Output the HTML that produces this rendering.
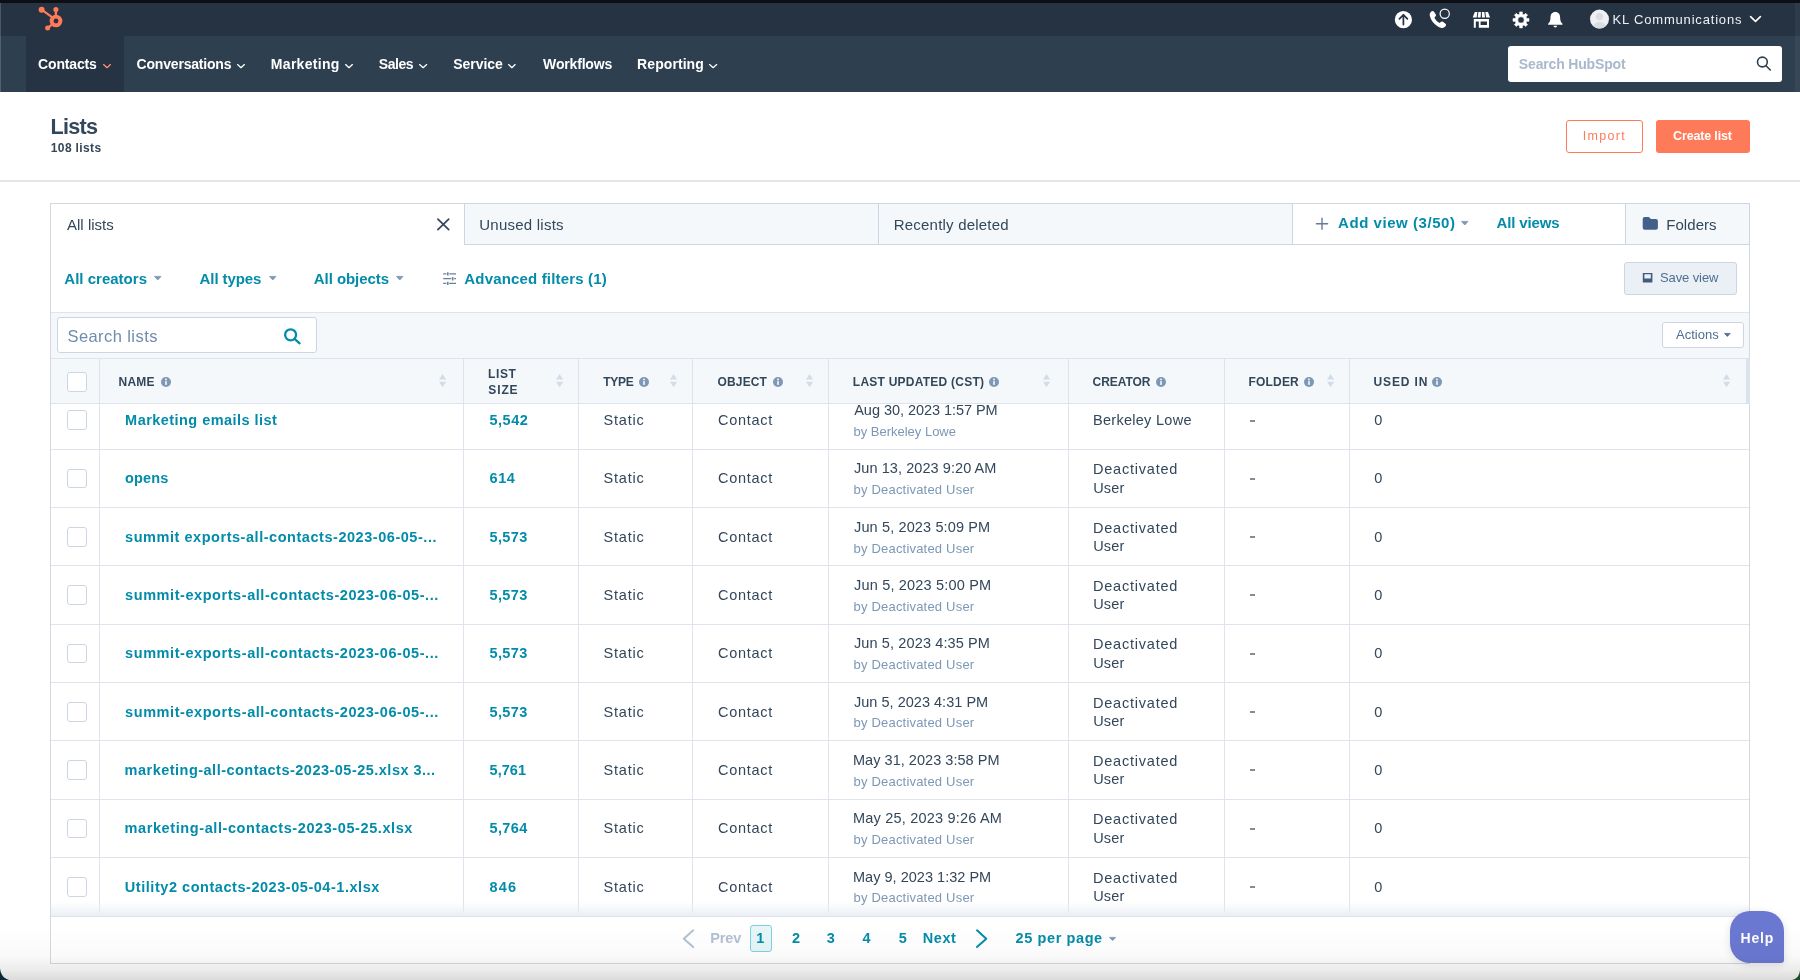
<!DOCTYPE html>
<html lang="en"><head><meta charset="utf-8"><title>Lists</title>
<style>
html,body{margin:0;padding:0}
body{width:1800px;height:980px;position:relative;overflow:hidden;background:#fff;font-family:'Liberation Sans', sans-serif;}
.t{position:absolute;white-space:pre;line-height:1;font-family:'Liberation Sans', sans-serif;}
#L{position:absolute;left:0;top:0;width:1800px;height:980px;will-change:transform;}
.a{position:absolute;box-sizing:border-box;}
svg{position:absolute;overflow:visible}
</style></head>
<body>
<div id="L">
<div class="a" style="left:0px;top:0px;width:1800px;height:2.8px;background:#0d0f14"></div>
<div class="a" style="left:0px;top:3px;width:1800px;height:33px;background:#253342"></div>
<div class="a" style="left:0px;top:35.5px;width:1800px;height:56px;background:#2e3f50"></div>
<div class="a" style="left:26px;top:35.5px;width:97.5px;height:56px;background:#253342"></div>
<div class="a" style="left:0px;top:0px;width:1800px;height:2.8px;background:#0d0f14"></div>
<div class="a" style="left:1794.5px;top:3px;width:5.5px;height:88.5px;background:rgba(255,255,255,0.045)"></div>
<div class="a" style="left:0px;top:3px;width:1px;height:88.5px;background:rgba(255,255,255,0.18)"></div>
<div class="a" style="left:1507.5px;top:45.75px;width:274.25px;height:35.75px;background:#fff;border-radius:3px"></div>
<div class="a" style="left:0px;top:180px;width:1800px;height:2px;background:#e3e6eb"></div>
<div class="a" style="left:1566px;top:119.5px;width:77px;height:33.25px;border:1px solid #ff7a59;border-radius:3px;background:#fff"></div>
<div class="a" style="left:1656px;top:119.5px;width:94px;height:33.25px;background:#ff7a59;border-radius:3px"></div>
<div class="a" style="left:50px;top:203px;width:1700px;height:761px;border:1px solid #d5d9df;background:#fff"></div>
<div class="a" style="left:464.25px;top:203px;width:828.75px;height:42px;background:#f5f8fa;border:1px solid #cbd6e2"></div>
<div class="a" style="left:878px;top:204px;width:1px;height:40.5px;background:#cbd6e2"></div>
<div class="a" style="left:1292px;top:244px;width:334px;height:1px;background:#cbd6e2"></div>
<div class="a" style="left:1625.25px;top:203px;width:124.5px;height:42px;background:#f5f8fa;border:1px solid #cbd6e2"></div>
<div class="a" style="left:1624px;top:262.25px;width:112.75px;height:32.25px;background:#eaf0f6;border:1px solid #cbd6e2;border-radius:3px"></div>
<div class="a" style="left:51px;top:312px;width:1698px;height:46px;background:#f5f8fa;border-top:1px solid #dfe3eb"></div>
<div class="a" style="left:57px;top:317px;width:259.75px;height:36px;background:#fff;border:1px solid #cbd6e2;border-radius:3px"></div>
<div class="a" style="left:1662px;top:321.75px;width:82px;height:26px;background:#fff;border:1px solid #cbd6e2;border-radius:3px"></div>
<div class="a" style="left:51px;top:358px;width:1698px;height:46px;background:#f5f8fa;border-top:1px solid #dfe3eb;border-bottom:1px solid #dfe3eb"></div>
<div class="a" style="left:1746px;top:358px;width:3.5px;height:46px;background:#dbe3ee"></div>
<div class="a" style="left:99.0px;top:358px;width:1px;height:554.5px;background:#dfe3eb"></div>
<div class="a" style="left:463.0px;top:358px;width:1px;height:554.5px;background:#dfe3eb"></div>
<div class="a" style="left:578.0px;top:358px;width:1px;height:554.5px;background:#dfe3eb"></div>
<div class="a" style="left:692.0px;top:358px;width:1px;height:554.5px;background:#dfe3eb"></div>
<div class="a" style="left:828.0px;top:358px;width:1px;height:554.5px;background:#dfe3eb"></div>
<div class="a" style="left:1067.5px;top:358px;width:1px;height:554.5px;background:#dfe3eb"></div>
<div class="a" style="left:1224.0px;top:358px;width:1px;height:554.5px;background:#dfe3eb"></div>
<div class="a" style="left:1349.0px;top:358px;width:1px;height:554.5px;background:#dfe3eb"></div>
<div class="a" style="left:51px;top:448.75px;width:1698px;height:1px;background:#dfe3eb"></div>
<div class="a" style="left:51px;top:507.08px;width:1698px;height:1px;background:#dfe3eb"></div>
<div class="a" style="left:51px;top:565.41px;width:1698px;height:1px;background:#dfe3eb"></div>
<div class="a" style="left:51px;top:623.74px;width:1698px;height:1px;background:#dfe3eb"></div>
<div class="a" style="left:51px;top:682.0699999999999px;width:1698px;height:1px;background:#dfe3eb"></div>
<div class="a" style="left:51px;top:740.4px;width:1698px;height:1px;background:#dfe3eb"></div>
<div class="a" style="left:51px;top:798.73px;width:1698px;height:1px;background:#dfe3eb"></div>
<div class="a" style="left:51px;top:857.06px;width:1698px;height:1px;background:#dfe3eb"></div>
<div class="a" style="left:51px;top:902px;width:1698px;height:15px;background:linear-gradient(to bottom, rgba(235,240,246,0) 0%, rgba(232,237,244,0.95) 100%)"></div>
<div class="a" style="left:51px;top:916px;width:1698px;height:47px;background:#fff;border-top:1.5px solid #dde3ec"></div>
<div class="a" style="left:750px;top:925.25px;width:22px;height:26.25px;background:#e5f5f8;border:1px solid #7fd1de;border-radius:3px"></div>
<div class="a" style="left:67px;top:371.5px;width:20px;height:20px;background:#fff;border:1.5px solid #cbd6e2;border-radius:3px"></div>
<div class="a" style="left:67px;top:410.20000000000005px;width:20px;height:19.8px;background:#fff;border:1.5px solid #cbd6e2;border-radius:3px"></div>
<div class="a" style="left:67px;top:468.53000000000003px;width:20px;height:19.8px;background:#fff;border:1.5px solid #cbd6e2;border-radius:3px"></div>
<div class="a" style="left:67px;top:526.86px;width:20px;height:19.8px;background:#fff;border:1.5px solid #cbd6e2;border-radius:3px"></div>
<div class="a" style="left:67px;top:585.19px;width:20px;height:19.8px;background:#fff;border:1.5px solid #cbd6e2;border-radius:3px"></div>
<div class="a" style="left:67px;top:643.5200000000001px;width:20px;height:19.8px;background:#fff;border:1.5px solid #cbd6e2;border-radius:3px"></div>
<div class="a" style="left:67px;top:701.85px;width:20px;height:19.8px;background:#fff;border:1.5px solid #cbd6e2;border-radius:3px"></div>
<div class="a" style="left:67px;top:760.1800000000001px;width:20px;height:19.8px;background:#fff;border:1.5px solid #cbd6e2;border-radius:3px"></div>
<div class="a" style="left:67px;top:818.5100000000001px;width:20px;height:19.8px;background:#fff;border:1.5px solid #cbd6e2;border-radius:3px"></div>
<div class="a" style="left:67px;top:876.84px;width:20px;height:19.8px;background:#fff;border:1.5px solid #cbd6e2;border-radius:3px"></div>
<div class="a" style="left:1730px;top:910.75px;width:53.6px;height:52.3px;background:#6a78d1;border-radius:20px 20px 3px 20px;box-shadow:0 2px 8px rgba(0,0,0,0.12)"></div>
<div class="a" style="left:1250.25px;top:420px;width:4.75px;height:2px;background:#33475b;opacity:0.62"></div>
<div class="a" style="left:1250.25px;top:478px;width:4.75px;height:2px;background:#33475b;opacity:0.62"></div>
<div class="a" style="left:1250.25px;top:536px;width:4.75px;height:2px;background:#33475b;opacity:0.62"></div>
<div class="a" style="left:1250.25px;top:594px;width:4.75px;height:2px;background:#33475b;opacity:0.62"></div>
<div class="a" style="left:1250.25px;top:653px;width:4.75px;height:2px;background:#33475b;opacity:0.62"></div>
<div class="a" style="left:1250.25px;top:711px;width:4.75px;height:2px;background:#33475b;opacity:0.62"></div>
<div class="a" style="left:1250.25px;top:769px;width:4.75px;height:2px;background:#33475b;opacity:0.62"></div>
<div class="a" style="left:1250.25px;top:828px;width:4.75px;height:2px;background:#33475b;opacity:0.62"></div>
<div class="a" style="left:1250.25px;top:886px;width:4.75px;height:2px;background:#33475b;opacity:0.62"></div>
<svg style="left:36px;top:4px" width="30" height="30" viewBox="36 4 30 30"><g fill="none" stroke="#ff7a59" stroke-width="2.3" stroke-linecap="round"><circle cx="56" cy="21" r="4.4" stroke-width="3.9"/><line x1="55.9" y1="10.5" x2="55.9" y2="15.5"/><line x1="42.6" y1="10.4" x2="51.6" y2="16.9"/><line x1="48.2" y1="27.5" x2="52" y2="24.6"/></g><g fill="#ff7a59"><circle cx="41.6" cy="9.7" r="3"/><circle cx="55.9" cy="9.5" r="2.55"/><circle cx="47.6" cy="28.1" r="2.5"/></g></svg>
<svg style="left:100.5px;top:61.75px" width="12.0" height="8.25" viewBox="100.5 61.75 12.0 8.25"><polyline points="103.1,64.35 106.5,67.4 109.9,64.35" fill="none" stroke="#ff8f73" stroke-width="1.35" stroke-linecap="round" stroke-linejoin="round"/></svg>
<svg style="left:235px;top:61.75px" width="12" height="8.25" viewBox="235 61.75 12 8.25"><polyline points="237.6,64.35 241.0,67.4 244.4,64.35" fill="none" stroke="#ffffff" stroke-width="1.35" stroke-linecap="round" stroke-linejoin="round"/></svg>
<svg style="left:342.5px;top:61.75px" width="12.0" height="8.25" viewBox="342.5 61.75 12.0 8.25"><polyline points="345.1,64.35 348.5,67.4 351.9,64.35" fill="none" stroke="#ffffff" stroke-width="1.35" stroke-linecap="round" stroke-linejoin="round"/></svg>
<svg style="left:417.25px;top:61.75px" width="12.25" height="8.25" viewBox="417.25 61.75 12.25 8.25"><polyline points="419.85,64.35 423.375,67.4 426.9,64.35" fill="none" stroke="#ffffff" stroke-width="1.35" stroke-linecap="round" stroke-linejoin="round"/></svg>
<svg style="left:506px;top:61.75px" width="11.75" height="8.25" viewBox="506 61.75 11.75 8.25"><polyline points="508.6,64.35 511.875,67.4 515.15,64.35" fill="none" stroke="#ffffff" stroke-width="1.35" stroke-linecap="round" stroke-linejoin="round"/></svg>
<svg style="left:706.75px;top:61.75px" width="12.25" height="8.25" viewBox="706.75 61.75 12.25 8.25"><polyline points="709.35,64.35 712.875,67.4 716.4,64.35" fill="none" stroke="#ffffff" stroke-width="1.35" stroke-linecap="round" stroke-linejoin="round"/></svg>
<svg style="left:1748px;top:14.25px" width="15" height="10.0" viewBox="1748 14.25 15 10.0"><polyline points="1750.6,16.85 1755.5,21.65 1760.4,16.85" fill="none" stroke="#ffffff" stroke-width="1.6" stroke-linecap="round" stroke-linejoin="round"/></svg>
<svg style="left:1393px;top:9px" width="22" height="22" viewBox="1393 9 22 22"><circle cx="1403.4" cy="19.7" r="8.6" fill="#fff"/><g fill="none" stroke="#253342" stroke-width="1.7" stroke-linecap="round" stroke-linejoin="round"><line x1="1403.4" y1="15" x2="1403.4" y2="24.6"/><polyline points="1399.4,18.8 1403.4,14.8 1407.4,18.8"/></g></svg>
<svg style="left:1428px;top:9px" width="24" height="22" viewBox="1428 9 24 22"><path d="M1431.2 11.6 c0.9 -0.9 2 -0.8 2.6 0 l1.9 2.7 c0.5 0.8 0.4 1.6 -0.3 2.2 l-1 0.9 c1 2.3 2.9 4.4 5.3 5.6 l1 -1 c0.6 -0.6 1.5 -0.7 2.2 -0.2 l2.6 1.9 c0.8 0.6 0.8 1.7 0 2.5 l-1.2 1.1 c-1 0.9 -2.4 1 -3.7 0.5 c-5.2 -2 -9.500 -6.7 -10.8 -12.1 c-0.300 -1.300 0 -2.600 0.900 -3.400 z" fill="#fff"/><circle cx="1444.7" cy="13.8" r="4.6" fill="#253342" stroke="#fff" stroke-width="1.2"/></svg>
<svg style="left:1471px;top:10px" width="22" height="20" viewBox="1471 10 22 20"><g fill="#fff"><path d="M1474.8 12 h2.6 l-0.7 5.6 h-4 z"/><path d="M1478.4 12 h2.500 l-0.2 5.6 h-3 z"/><path d="M1481.900 12 h2.500 l0.600 5.600 h-3 z"/><path d="M1485.400 12 h2.600 l2.100 5.600 h-4 z"/><path d="M1473.8 19 h15.2 v8.8 h-15.2 z M1475.800 21.400 v6.400 h3 v-6.400 z M1480.600 21.400 v3.600 h6.400 v-3.600 z" fill-rule="evenodd"/></g></svg>
<svg style="left:1511px;top:10px" width="20" height="20" viewBox="1511 10 20 20"><path d="M1528.98 18.51 L1528.98 21.29 L1526.74 21.28 L1526.03 22.98 L1527.63 24.56 L1525.66 26.53 L1524.08 24.93 L1522.38 25.64 L1522.39 27.88 L1519.61 27.88 L1519.62 25.64 L1517.92 24.93 L1516.34 26.53 L1514.37 24.56 L1515.97 22.98 L1515.26 21.28 L1513.02 21.29 L1513.02 18.51 L1515.26 18.52 L1515.97 16.82 L1514.37 15.24 L1516.34 13.27 L1517.92 14.87 L1519.62 14.16 L1519.61 11.92 L1522.39 11.92 L1522.38 14.16 L1524.08 14.87 L1525.66 13.27 L1527.63 15.24 L1526.03 16.82 L1526.74 18.52 Z M1524.20 19.90 A3.2 3.2 0 1 0 1517.80 19.90 A3.2 3.2 0 1 0 1524.20 19.90 Z" fill="#fff" fill-rule="evenodd" stroke="#fff" stroke-width="0.6" stroke-linejoin="round"/></svg>
<svg style="left:1546px;top:10px" width="20" height="20" viewBox="1546 10 20 20"><path d="M1555.300 12 c-3.200 0 -4.800 2.400 -4.800 5.400 c0 3.600 -1 5 -2.400 6.400 v0.900 h14.400 v-0.900 c-1.400 -1.400 -2.400 -2.800 -2.400 -6.400 c0 -3 -1.600 -5.400 -4.800 -5.400 z" fill="#fff"/><path d="M1553.500 25.700 h3.600 c0 1 -0.800 1.700 -1.800 1.700 s-1.800 -0.700 -1.800 -1.700 z" fill="#fff"/></svg>
<svg style="left:1589px;top:9px" width="22" height="22" viewBox="1589 9 22 22"><defs><clipPath id="avc"><circle cx="1599.5" cy="19.1" r="9.5"/></clipPath></defs><circle cx="1599.5" cy="19.1" r="9.5" fill="#eef0f3"/><g clip-path="url(#avc)" fill="#d9dde3"><circle cx="1599.5" cy="16.6" r="3.6"/><ellipse cx="1599.5" cy="27.5" rx="6.8" ry="5.4"/></g></svg>
<svg style="left:1754px;top:55px" width="20" height="20" viewBox="1754 55 20 20"><g fill="none" stroke="#2d3e50" stroke-width="1.600" stroke-linecap="round"><circle cx="1762.400" cy="62" r="4.900"/><line x1="1766" y1="65.700" x2="1770.300" y2="70"/></g></svg>
<svg style="left:435px;top:216px" width="17" height="17" viewBox="435 216 17 17"><g stroke="#33475b" stroke-width="1.7" stroke-linecap="round"><line x1="437.900" y1="219.100" x2="448.700" y2="229.700"/><line x1="448.700" y1="219.100" x2="437.900" y2="229.700"/></g></svg>
<svg style="left:152.75px;top:274.6px" width="9.5" height="6.4" viewBox="152.75 274.6 9.5 6.4"><path d="M154.25 276.0 h6.5 l-3.25 3.6000000000000005 z" fill="#7c98b6" stroke="#7c98b6" stroke-width="0.8" stroke-linejoin="round"/></svg>
<svg style="left:267.5px;top:274.6px" width="9.5" height="6.4" viewBox="267.5 274.6 9.5 6.4"><path d="M269.0 276.0 h6.5 l-3.25 3.6000000000000005 z" fill="#7c98b6" stroke="#7c98b6" stroke-width="0.8" stroke-linejoin="round"/></svg>
<svg style="left:394.5px;top:274.6px" width="9.5" height="6.4" viewBox="394.5 274.6 9.5 6.4"><path d="M396.0 276.0 h6.5 l-3.25 3.6000000000000005 z" fill="#7c98b6" stroke="#7c98b6" stroke-width="0.8" stroke-linejoin="round"/></svg>
<svg style="left:1460.3px;top:219.8px" width="9.5" height="6.4" viewBox="1460.3 219.8 9.5 6.4"><path d="M1461.8 221.20000000000002 h6.5 l-3.25 3.6000000000000005 z" fill="#7c98b6" stroke="#7c98b6" stroke-width="0.8" stroke-linejoin="round"/></svg>
<svg style="left:1723px;top:331.8px" width="8.7" height="5.8" viewBox="1723 331.8 8.7 5.8"><path d="M1724.5 333.2 h5.7 l-2.85 3.0 z" fill="#506e91" stroke="#506e91" stroke-width="0.8" stroke-linejoin="round"/></svg>
<svg style="left:1108.3px;top:935.8px" width="9.2" height="6" viewBox="1108.3 935.8 9.2 6"><path d="M1109.8 937.1999999999999 h6.2 l-3.1 3.2 z" fill="#7c98b6" stroke="#7c98b6" stroke-width="0.8" stroke-linejoin="round"/></svg>
<svg style="left:441px;top:271px" width="17" height="16" viewBox="441 271 17 16"><g stroke="#6b7f9a" stroke-width="1.300" fill="none"><path d="M443.200 273.900 H446.400 M449.300 273.900 H456 M443.200 278.700 H451.300 M454.200 278.700 H456 M443.200 283.400 H446.400 M449.300 283.400 H456"/><path d="M447.800 272.200 V275.600 M452.700 277 V280.400 M447.800 281.700 V285.100" stroke-width="1.500"/></g></svg>
<svg style="left:1314px;top:216px" width="16" height="16" viewBox="1314 216 16 16"><g stroke="#657b98" stroke-width="1.400" stroke-linecap="round"><line x1="1316.400" y1="223.700" x2="1327.600" y2="223.700"/><line x1="1322" y1="218.100" x2="1322" y2="229.300"/></g></svg>
<svg style="left:1641px;top:215px" width="19" height="17" viewBox="1641 215 19 17"><path d="M1642.700 218.900 q0 -2 2 -2 h3.500 q1.200 0 1.800 1 l0.700 1.200 h5.200 q2 0 2 2 v6.600 q0 2 -2 2 h-11.200 q-2 0 -2 -2 z" fill="#44608a"/></svg>
<svg style="left:1641px;top:272px" width="13" height="12" viewBox="1641 272 13 12"><path d="M1642.800 273.100 h9.600 v9.500 h-9.600 z M1644.400 274.300 v4.200 h6.400 v-4.200 z" fill="#425b7e" fill-rule="evenodd"/></svg>
<svg style="left:282px;top:326px" width="21" height="21" viewBox="282 326 21 21"><g fill="none" stroke="#038ca9" stroke-width="2.300" stroke-linecap="round"><circle cx="290.600" cy="334.800" r="5.500"/><line x1="294.900" y1="339.100" x2="299.600" y2="343.300"/></g></svg>
<svg style="left:159.75px;top:376px" width="12" height="12" viewBox="159.75 376 12 12"><circle cx="165.75" cy="382" r="5" fill="#7c98b6"/><rect x="165.0" y="381.1" width="1.500" height="3.800" fill="#fff"/><circle cx="165.75" cy="379.4" r="0.900" fill="#fff"/></svg>
<svg style="left:638.25px;top:376px" width="12" height="12" viewBox="638.25 376 12 12"><circle cx="644.25" cy="382" r="5" fill="#7c98b6"/><rect x="643.5" y="381.1" width="1.500" height="3.800" fill="#fff"/><circle cx="644.25" cy="379.4" r="0.900" fill="#fff"/></svg>
<svg style="left:771.5px;top:376px" width="12" height="12" viewBox="771.5 376 12 12"><circle cx="777.5" cy="382" r="5" fill="#7c98b6"/><rect x="776.75" y="381.1" width="1.500" height="3.800" fill="#fff"/><circle cx="777.5" cy="379.4" r="0.900" fill="#fff"/></svg>
<svg style="left:988.25px;top:376px" width="12" height="12" viewBox="988.25 376 12 12"><circle cx="994.25" cy="382" r="5" fill="#7c98b6"/><rect x="993.5" y="381.1" width="1.500" height="3.800" fill="#fff"/><circle cx="994.25" cy="379.4" r="0.900" fill="#fff"/></svg>
<svg style="left:1154.75px;top:376px" width="12" height="12" viewBox="1154.75 376 12 12"><circle cx="1160.75" cy="382" r="5" fill="#7c98b6"/><rect x="1160.0" y="381.1" width="1.500" height="3.800" fill="#fff"/><circle cx="1160.75" cy="379.4" r="0.900" fill="#fff"/></svg>
<svg style="left:1303.3px;top:376px" width="12" height="12" viewBox="1303.3 376 12 12"><circle cx="1309.3" cy="382" r="5" fill="#7c98b6"/><rect x="1308.55" y="381.1" width="1.500" height="3.800" fill="#fff"/><circle cx="1309.3" cy="379.4" r="0.900" fill="#fff"/></svg>
<svg style="left:1431.3px;top:376px" width="12" height="12" viewBox="1431.3 376 12 12"><circle cx="1437.3" cy="382" r="5" fill="#7c98b6"/><rect x="1436.55" y="381.1" width="1.500" height="3.800" fill="#fff"/><circle cx="1437.3" cy="379.4" r="0.900" fill="#fff"/></svg>
<svg style="left:438.25px;top:372.75px" width="9.2" height="16" viewBox="438.25 372.75 9.2 16"><path d="M439.25 379.25 l3.6 -5.500 l3.6 5.500 z M439.25 381.55 h7.2 l-3.6 5.500 z" fill="#d3dce7"/></svg>
<svg style="left:554.5px;top:372.75px" width="9.2" height="16" viewBox="554.5 372.75 9.2 16"><path d="M555.5 379.25 l3.6 -5.500 l3.6 5.500 z M555.5 381.55 h7.2 l-3.6 5.500 z" fill="#d3dce7"/></svg>
<svg style="left:669px;top:372.75px" width="9.2" height="16" viewBox="669 372.75 9.2 16"><path d="M670 379.25 l3.6 -5.500 l3.6 5.500 z M670 381.55 h7.2 l-3.6 5.500 z" fill="#d3dce7"/></svg>
<svg style="left:804.5px;top:372.75px" width="9.2" height="16" viewBox="804.5 372.75 9.2 16"><path d="M805.5 379.25 l3.6 -5.500 l3.6 5.500 z M805.5 381.55 h7.2 l-3.6 5.500 z" fill="#d3dce7"/></svg>
<svg style="left:1042.25px;top:372.75px" width="9.2" height="16" viewBox="1042.25 372.75 9.2 16"><path d="M1043.25 379.25 l3.6 -5.500 l3.6 5.500 z M1043.25 381.55 h7.2 l-3.6 5.500 z" fill="#d3dce7"/></svg>
<svg style="left:1325.7px;top:372.75px" width="9.2" height="16" viewBox="1325.7 372.75 9.2 16"><path d="M1326.7 379.25 l3.6 -5.500 l3.6 5.500 z M1326.7 381.55 h7.2 l-3.6 5.500 z" fill="#d3dce7"/></svg>
<svg style="left:1722.3px;top:372.75px" width="9.2" height="16" viewBox="1722.3 372.75 9.2 16"><path d="M1723.3 379.25 l3.6 -5.500 l3.6 5.500 z M1723.3 381.55 h7.2 l-3.6 5.500 z" fill="#d3dce7"/></svg>
<svg style="left:680px;top:927px" width="17" height="23" viewBox="680 927 17 23"><polyline points="693.200,930.300 683.800,938.700 693.200,947" fill="none" stroke="#b0c1d4" stroke-width="2" stroke-linecap="round" stroke-linejoin="round"/></svg>
<svg style="left:974px;top:927px" width="17" height="23" viewBox="974 927 17 23"><polyline points="977,930.300 986.300,938.700 977,947" fill="none" stroke="#038ca9" stroke-width="2" stroke-linecap="round" stroke-linejoin="round"/></svg>
<span class="t" style="left:38.10px;top:57px;font-size:14px;color:#ffffff;font-weight:700;letter-spacing:-0.164px;">Contacts</span>
<span class="t" style="left:136.60px;top:57px;font-size:14px;color:#ffffff;font-weight:700;letter-spacing:-0.200px;">Conversations</span>
<span class="t" style="left:270.85px;top:57px;font-size:14px;color:#ffffff;font-weight:700;letter-spacing:0.294px;">Marketing</span>
<span class="t" style="left:378.85px;top:57px;font-size:14px;color:#ffffff;font-weight:700;letter-spacing:-0.475px;">Sales</span>
<span class="t" style="left:453.35px;top:57px;font-size:14px;color:#ffffff;font-weight:700;letter-spacing:-0.067px;">Service</span>
<span class="t" style="left:543.10px;top:57px;font-size:14px;color:#ffffff;font-weight:700;letter-spacing:-0.175px;">Workflows</span>
<span class="t" style="left:637.10px;top:57px;font-size:14px;color:#ffffff;font-weight:700;letter-spacing:0.075px;">Reporting</span>
<span class="t" style="left:1612.50px;top:13px;font-size:13px;color:#eef2f6;letter-spacing:0.819px;">KL Communications</span>
<span class="t" style="left:1518.85px;top:57px;font-size:14px;color:#a9b9cc;font-weight:700;letter-spacing:-0.165px;">Search HubSpot</span>
<span class="t" style="left:50.60px;top:116px;font-size:21.6px;color:#33475b;font-weight:700;letter-spacing:-0.725px;">Lists</span>
<span class="t" style="left:50.85px;top:142px;font-size:12px;color:#33475b;font-weight:700;letter-spacing:0.356px;">108 lists</span>
<span class="t" style="left:1582.75px;top:130px;font-size:12.5px;color:#ff7a59;letter-spacing:1.320px;">Import</span>
<span class="t" style="left:1673.10px;top:130px;font-size:12.5px;color:#ffffff;font-weight:700;letter-spacing:-0.165px;">Create list</span>
<span class="t" style="left:67.00px;top:217px;font-size:15px;color:#33475b;letter-spacing:0.013px;">All lists</span>
<span class="t" style="left:479.25px;top:217px;font-size:15px;color:#33475b;letter-spacing:0.236px;">Unused lists</span>
<span class="t" style="left:893.75px;top:217px;font-size:15px;color:#33475b;letter-spacing:0.207px;">Recently deleted</span>
<span class="t" style="left:1338.10px;top:215px;font-size:15px;color:#038ca9;font-weight:700;letter-spacing:0.543px;">Add view (3/50)</span>
<span class="t" style="left:1496.60px;top:215px;font-size:15px;color:#038ca9;font-weight:700;letter-spacing:-0.150px;">All views</span>
<span class="t" style="left:1666.25px;top:217px;font-size:15px;color:#33475b;letter-spacing:0.058px;">Folders</span>
<span class="t" style="left:64.35px;top:271px;font-size:15px;color:#038ca9;font-weight:700;letter-spacing:0.009px;">All creators</span>
<span class="t" style="left:199.60px;top:271px;font-size:15px;color:#038ca9;font-weight:700;letter-spacing:-0.081px;">All types</span>
<span class="t" style="left:313.85px;top:271px;font-size:15px;color:#038ca9;font-weight:700;letter-spacing:-0.065px;">All objects</span>
<span class="t" style="left:464.35px;top:271px;font-size:15px;color:#038ca9;font-weight:700;letter-spacing:0.163px;">Advanced filters (1)</span>
<span class="t" style="left:1660.05px;top:271px;font-size:13px;color:#506e91;letter-spacing:-0.112px;">Save view</span>
<span class="t" style="left:67.50px;top:328px;font-size:16.5px;color:#6f8cab;letter-spacing:0.418px;">Search lists</span>
<span class="t" style="left:1676.00px;top:328px;font-size:13px;color:#506e91;letter-spacing:0.008px;">Actions</span>
<span class="t" style="left:118.45px;top:376px;font-size:12px;color:#33475b;font-weight:700;letter-spacing:0.283px;">NAME</span>
<span class="t" style="left:488.10px;top:368px;font-size:12px;color:#33475b;font-weight:700;letter-spacing:0.617px;">LIST</span>
<span class="t" style="left:488.35px;top:384px;font-size:12px;color:#33475b;font-weight:700;letter-spacing:0.867px;">SIZE</span>
<span class="t" style="left:603.35px;top:376px;font-size:12px;color:#33475b;font-weight:700;letter-spacing:-0.300px;">TYPE</span>
<span class="t" style="left:717.60px;top:376px;font-size:12px;color:#33475b;font-weight:700;letter-spacing:0.120px;">OBJECT</span>
<span class="t" style="left:852.85px;top:376px;font-size:12px;color:#33475b;font-weight:700;letter-spacing:0.241px;">LAST UPDATED (CST)</span>
<span class="t" style="left:1092.60px;top:376px;font-size:12px;color:#33475b;font-weight:700;letter-spacing:-0.067px;">CREATOR</span>
<span class="t" style="left:1248.55px;top:376px;font-size:12px;color:#33475b;font-weight:700;letter-spacing:0.170px;">FOLDER</span>
<span class="t" style="left:1373.55px;top:376px;font-size:12px;color:#33475b;font-weight:700;letter-spacing:0.858px;">USED IN</span>
<span class="t" style="left:125.10px;top:413px;font-size:14.5px;color:#038ca9;font-weight:700;letter-spacing:0.455px;">Marketing emails list</span>
<span class="t" style="left:489.60px;top:413px;font-size:14.5px;color:#038ca9;font-weight:700;letter-spacing:0.463px;">5,542</span>
<span class="t" style="left:603.50px;top:413px;font-size:14.5px;color:#33475b;letter-spacing:0.820px;">Static</span>
<span class="t" style="left:718.00px;top:413px;font-size:14.5px;color:#33475b;letter-spacing:0.725px;">Contact</span>
<span class="t" style="left:854.25px;top:403px;font-size:14.5px;color:#33475b;letter-spacing:-0.047px;">Aug 30, 2023 1:57 PM</span>
<span class="t" style="left:853.50px;top:425px;font-size:13px;color:#7c98b6;letter-spacing:-0.010px;">by Berkeley Lowe</span>
<span class="t" style="left:1093.00px;top:413px;font-size:14.5px;color:#33475b;letter-spacing:0.279px;">Berkeley Lowe</span>
<span class="t" style="left:1374.20px;top:413px;font-size:14.5px;color:#33475b;">0</span>
<span class="t" style="left:125.10px;top:471px;font-size:14.5px;color:#038ca9;font-weight:700;letter-spacing:0.150px;">opens</span>
<span class="t" style="left:489.60px;top:471px;font-size:14.5px;color:#038ca9;font-weight:700;letter-spacing:0.550px;">614</span>
<span class="t" style="left:603.50px;top:471px;font-size:14.5px;color:#33475b;letter-spacing:0.820px;">Static</span>
<span class="t" style="left:718.00px;top:471px;font-size:14.5px;color:#33475b;letter-spacing:0.725px;">Contact</span>
<span class="t" style="left:854.00px;top:461px;font-size:14.5px;color:#33475b;letter-spacing:0.071px;">Jun 13, 2023 9:20 AM</span>
<span class="t" style="left:853.50px;top:483px;font-size:13px;color:#7c98b6;letter-spacing:0.200px;">by Deactivated User</span>
<span class="t" style="left:1093.00px;top:462px;font-size:14.5px;color:#33475b;letter-spacing:0.785px;">Deactivated</span>
<span class="t" style="left:1093.25px;top:481px;font-size:14.5px;color:#33475b;letter-spacing:0.117px;">User</span>
<span class="t" style="left:1374.20px;top:471px;font-size:14.5px;color:#33475b;">0</span>
<span class="t" style="left:125.10px;top:530px;font-size:14.5px;color:#038ca9;font-weight:700;letter-spacing:0.539px;">summit exports-all-contacts-2023-06-05-...</span>
<span class="t" style="left:489.60px;top:530px;font-size:14.5px;color:#038ca9;font-weight:700;letter-spacing:0.338px;">5,573</span>
<span class="t" style="left:603.50px;top:530px;font-size:14.5px;color:#33475b;letter-spacing:0.820px;">Static</span>
<span class="t" style="left:718.00px;top:530px;font-size:14.5px;color:#33475b;letter-spacing:0.725px;">Contact</span>
<span class="t" style="left:854.00px;top:520px;font-size:14.5px;color:#33475b;letter-spacing:0.131px;">Jun 5, 2023 5:09 PM</span>
<span class="t" style="left:853.50px;top:542px;font-size:13px;color:#7c98b6;letter-spacing:0.200px;">by Deactivated User</span>
<span class="t" style="left:1093.00px;top:521px;font-size:14.5px;color:#33475b;letter-spacing:0.785px;">Deactivated</span>
<span class="t" style="left:1093.25px;top:539px;font-size:14.5px;color:#33475b;letter-spacing:0.117px;">User</span>
<span class="t" style="left:1374.20px;top:530px;font-size:14.5px;color:#33475b;">0</span>
<span class="t" style="left:125.10px;top:588px;font-size:14.5px;color:#038ca9;font-weight:700;letter-spacing:0.563px;">summit-exports-all-contacts-2023-06-05-...</span>
<span class="t" style="left:489.60px;top:588px;font-size:14.5px;color:#038ca9;font-weight:700;letter-spacing:0.338px;">5,573</span>
<span class="t" style="left:603.50px;top:588px;font-size:14.5px;color:#33475b;letter-spacing:0.820px;">Static</span>
<span class="t" style="left:718.00px;top:588px;font-size:14.5px;color:#33475b;letter-spacing:0.725px;">Contact</span>
<span class="t" style="left:854.00px;top:578px;font-size:14.5px;color:#33475b;letter-spacing:0.186px;">Jun 5, 2023 5:00 PM</span>
<span class="t" style="left:853.50px;top:600px;font-size:13px;color:#7c98b6;letter-spacing:0.200px;">by Deactivated User</span>
<span class="t" style="left:1093.00px;top:579px;font-size:14.5px;color:#33475b;letter-spacing:0.785px;">Deactivated</span>
<span class="t" style="left:1093.25px;top:597px;font-size:14.5px;color:#33475b;letter-spacing:0.117px;">User</span>
<span class="t" style="left:1374.20px;top:588px;font-size:14.5px;color:#33475b;">0</span>
<span class="t" style="left:125.10px;top:646px;font-size:14.5px;color:#038ca9;font-weight:700;letter-spacing:0.563px;">summit-exports-all-contacts-2023-06-05-...</span>
<span class="t" style="left:489.60px;top:646px;font-size:14.5px;color:#038ca9;font-weight:700;letter-spacing:0.338px;">5,573</span>
<span class="t" style="left:603.50px;top:646px;font-size:14.5px;color:#33475b;letter-spacing:0.820px;">Static</span>
<span class="t" style="left:718.00px;top:646px;font-size:14.5px;color:#33475b;letter-spacing:0.725px;">Contact</span>
<span class="t" style="left:854.00px;top:636px;font-size:14.5px;color:#33475b;letter-spacing:0.117px;">Jun 5, 2023 4:35 PM</span>
<span class="t" style="left:853.50px;top:658px;font-size:13px;color:#7c98b6;letter-spacing:0.200px;">by Deactivated User</span>
<span class="t" style="left:1093.00px;top:637px;font-size:14.5px;color:#33475b;letter-spacing:0.785px;">Deactivated</span>
<span class="t" style="left:1093.25px;top:656px;font-size:14.5px;color:#33475b;letter-spacing:0.117px;">User</span>
<span class="t" style="left:1374.20px;top:646px;font-size:14.5px;color:#33475b;">0</span>
<span class="t" style="left:125.10px;top:705px;font-size:14.5px;color:#038ca9;font-weight:700;letter-spacing:0.563px;">summit-exports-all-contacts-2023-06-05-...</span>
<span class="t" style="left:489.60px;top:705px;font-size:14.5px;color:#038ca9;font-weight:700;letter-spacing:0.338px;">5,573</span>
<span class="t" style="left:603.50px;top:705px;font-size:14.5px;color:#33475b;letter-spacing:0.820px;">Static</span>
<span class="t" style="left:718.00px;top:705px;font-size:14.5px;color:#33475b;letter-spacing:0.725px;">Contact</span>
<span class="t" style="left:854.00px;top:695px;font-size:14.5px;color:#33475b;letter-spacing:0.019px;">Jun 5, 2023 4:31 PM</span>
<span class="t" style="left:853.50px;top:716px;font-size:13px;color:#7c98b6;letter-spacing:0.200px;">by Deactivated User</span>
<span class="t" style="left:1093.00px;top:696px;font-size:14.5px;color:#33475b;letter-spacing:0.785px;">Deactivated</span>
<span class="t" style="left:1093.25px;top:714px;font-size:14.5px;color:#33475b;letter-spacing:0.117px;">User</span>
<span class="t" style="left:1374.20px;top:705px;font-size:14.5px;color:#33475b;">0</span>
<span class="t" style="left:124.60px;top:763px;font-size:14.5px;color:#038ca9;font-weight:700;letter-spacing:0.485px;">marketing-all-contacts-2023-05-25.xlsx 3...</span>
<span class="t" style="left:489.60px;top:763px;font-size:14.5px;color:#038ca9;font-weight:700;letter-spacing:0.025px;">5,761</span>
<span class="t" style="left:603.50px;top:763px;font-size:14.5px;color:#33475b;letter-spacing:0.820px;">Static</span>
<span class="t" style="left:718.00px;top:763px;font-size:14.5px;color:#33475b;letter-spacing:0.725px;">Contact</span>
<span class="t" style="left:853.00px;top:753px;font-size:14.5px;color:#33475b;letter-spacing:0.032px;">May 31, 2023 3:58 PM</span>
<span class="t" style="left:853.50px;top:775px;font-size:13px;color:#7c98b6;letter-spacing:0.200px;">by Deactivated User</span>
<span class="t" style="left:1093.00px;top:754px;font-size:14.5px;color:#33475b;letter-spacing:0.785px;">Deactivated</span>
<span class="t" style="left:1093.25px;top:772px;font-size:14.5px;color:#33475b;letter-spacing:0.117px;">User</span>
<span class="t" style="left:1374.20px;top:763px;font-size:14.5px;color:#33475b;">0</span>
<span class="t" style="left:124.60px;top:821px;font-size:14.5px;color:#038ca9;font-weight:700;letter-spacing:0.591px;">marketing-all-contacts-2023-05-25.xlsx</span>
<span class="t" style="left:489.60px;top:821px;font-size:14.5px;color:#038ca9;font-weight:700;letter-spacing:0.338px;">5,764</span>
<span class="t" style="left:603.50px;top:821px;font-size:14.5px;color:#33475b;letter-spacing:0.820px;">Static</span>
<span class="t" style="left:718.00px;top:821px;font-size:14.5px;color:#33475b;letter-spacing:0.725px;">Contact</span>
<span class="t" style="left:853.00px;top:811px;font-size:14.5px;color:#33475b;letter-spacing:0.203px;">May 25, 2023 9:26 AM</span>
<span class="t" style="left:853.50px;top:833px;font-size:13px;color:#7c98b6;letter-spacing:0.200px;">by Deactivated User</span>
<span class="t" style="left:1093.00px;top:812px;font-size:14.5px;color:#33475b;letter-spacing:0.785px;">Deactivated</span>
<span class="t" style="left:1093.25px;top:831px;font-size:14.5px;color:#33475b;letter-spacing:0.117px;">User</span>
<span class="t" style="left:1374.20px;top:821px;font-size:14.5px;color:#33475b;">0</span>
<span class="t" style="left:124.85px;top:880px;font-size:14.5px;color:#038ca9;font-weight:700;letter-spacing:0.540px;">Utility2 contacts-2023-05-04-1.xlsx</span>
<span class="t" style="left:489.60px;top:880px;font-size:14.5px;color:#038ca9;font-weight:700;letter-spacing:1.175px;">846</span>
<span class="t" style="left:603.50px;top:880px;font-size:14.5px;color:#33475b;letter-spacing:0.820px;">Static</span>
<span class="t" style="left:718.00px;top:880px;font-size:14.5px;color:#33475b;letter-spacing:0.725px;">Contact</span>
<span class="t" style="left:853.00px;top:870px;font-size:14.5px;color:#33475b;letter-spacing:0.019px;">May 9, 2023 1:32 PM</span>
<span class="t" style="left:853.50px;top:891px;font-size:13px;color:#7c98b6;letter-spacing:0.200px;">by Deactivated User</span>
<span class="t" style="left:1093.00px;top:871px;font-size:14.5px;color:#33475b;letter-spacing:0.785px;">Deactivated</span>
<span class="t" style="left:1093.25px;top:889px;font-size:14.5px;color:#33475b;letter-spacing:0.117px;">User</span>
<span class="t" style="left:1374.20px;top:880px;font-size:14.5px;color:#33475b;">0</span>
<span class="t" style="left:710.30px;top:931px;font-size:14.5px;color:#b3bfd3;font-weight:700;letter-spacing:-0.183px;">Prev</span>
<span class="t" style="left:756.30px;top:931px;font-size:14.5px;color:#038ca9;font-weight:700;">1</span>
<span class="t" style="left:792.00px;top:931px;font-size:14.5px;color:#038ca9;font-weight:700;">2</span>
<span class="t" style="left:826.70px;top:931px;font-size:14.5px;color:#038ca9;font-weight:700;">3</span>
<span class="t" style="left:862.45px;top:931px;font-size:14.5px;color:#038ca9;font-weight:700;">4</span>
<span class="t" style="left:898.70px;top:931px;font-size:14.5px;color:#038ca9;font-weight:700;">5</span>
<span class="t" style="left:922.80px;top:931px;font-size:14.5px;color:#038ca9;font-weight:700;letter-spacing:0.550px;">Next</span>
<span class="t" style="left:1015.60px;top:931px;font-size:14.5px;color:#038ca9;font-weight:700;letter-spacing:0.600px;">25 per page</span>
<span class="t" style="left:1740.50px;top:931px;font-size:14px;color:#ffffff;font-weight:700;letter-spacing:0.817px;">Help</span>
<div class="a" style="left:0;top:925px;width:1800px;height:55px;background:linear-gradient(to bottom, rgba(0,0,0,0) 0%, rgba(0,0,0,0.02) 55%, rgba(0,0,0,0.07) 80%, rgba(0,0,0,0.14) 100%);pointer-events:none"></div>
<svg style="left:0;top:968px" width="9" height="12" viewBox="0 0 9 12"><path d="M0 0 C0.500 6 3.500 10.500 9 12 L0 12 Z" fill="#0b2a36"/></svg>
<svg style="left:1792px;top:970px" width="8" height="10" viewBox="0 0 8 10"><path d="M8 0 C7.500 5.500 5 9 0 10 L8 10 Z" fill="#1f4a2c"/></svg>
</div>
</body></html>
